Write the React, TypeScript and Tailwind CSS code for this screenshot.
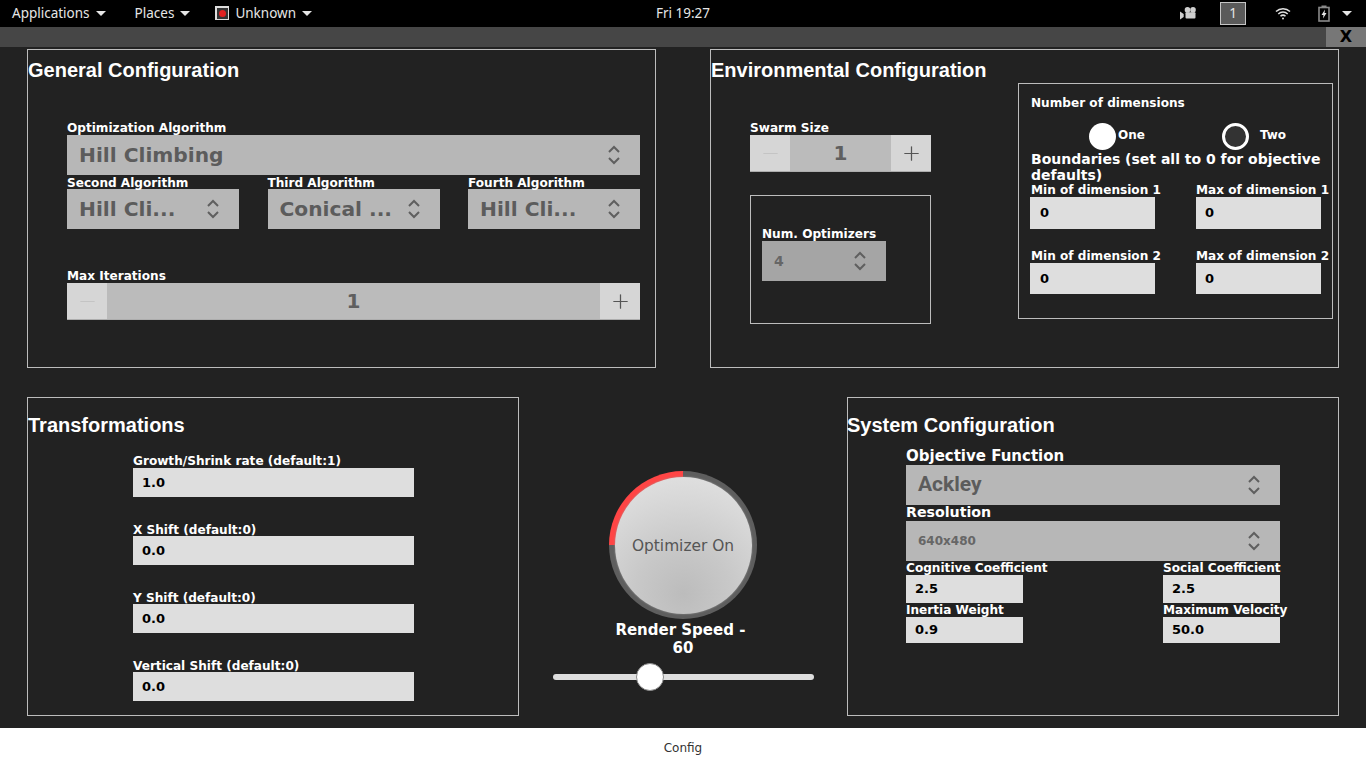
import { Minus, Plus } from "lucide-react";

const sans = "font-['DejaVu_Sans',sans-serif] font-bold";

function Caret() {
  return <span className="ml-[6px] inline-block h-0 w-0 border-x-[5px] border-t-[5px] border-x-transparent border-t-[#e6e6e6]" />;
}

function UpDown({ color = "#5f5f5f" }: { color?: string }) {
  return (
    <svg width="14" height="20" viewBox="0 0 14 20" fill="none" stroke={color} strokeWidth="2" className="shrink-0">
      <path d="M2 7l5-5 5 5" />
      <path d="M2 13l5 5 5-5" />
    </svg>
  );
}

function Label({ children, className = "" }: { children: string; className?: string }) {
  return <div className={`h-[14px] text-[12.1px] leading-[14px] whitespace-nowrap text-white ${sans} ${className}`}>{children}</div>;
}

function Select({ value, className = "" }: { value: string; className?: string }) {
  return (
    <div className={`flex h-[40px] items-center justify-between bg-[#b7b7b7] pl-[12px] pr-[19px] text-[20.2px] text-[#5c5c5c] ${sans} ${className}`}>
      <span className="whitespace-nowrap">{value}</span>
      <UpDown />
    </div>
  );
}

function Stepper({ className = "" }: { className?: string }) {
  return (
    <div className={`flex h-[37px] border-b border-[#adadad] bg-[#bbbbbb] ${className}`}>
      <div className="flex w-[40px] items-center justify-center bg-[#d6d6d6]">
        <Minus size={23} strokeWidth={1.3} className="text-[#c4c4c4]" />
      </div>
      <div className={`flex flex-1 items-center justify-center text-[20px] text-[#5f5f5f] ${sans}`}>1</div>
      <div className="flex w-[40px] items-center justify-center bg-[#d6d6d6]">
        <Plus size={23} strokeWidth={1.3} className="text-[#555555]" />
      </div>
    </div>
  );
}

function Input({ value, className = "" }: { value: string; className?: string }) {
  return <div className={`flex items-center bg-[#dedede] pl-[9px] text-[13px] text-black ${sans} ${className}`}>{value}</div>;
}

function Heading({ children, className = "" }: { children: string; className?: string }) {
  return <h2 className={`text-[20px] leading-[24px] font-bold text-white font-['Liberation_Sans',sans-serif] ${className}`}>{children}</h2>;
}

function TopBar() {
  return (
    <header className="grid h-[27px] shrink-0 grid-cols-3 items-center bg-black pb-[1px] text-[13.5px] text-[#e6e6e6] font-['Noto_Sans',sans-serif]">
      <div className="flex items-center pl-[12px]">
        <span>Applications</span>
        <Caret />
        <span className="ml-[29px]">Places</span>
        <Caret />
        <span className="ml-[25px] flex h-[14px] w-[14px] items-center justify-center bg-[#dddddd]">
          <span className="flex h-[11px] w-[11px] items-center justify-center bg-[#333333]">
            <span className="h-[7px] w-[7px] rounded-full bg-[#e02020]" />
          </span>
        </span>
        <span className="ml-[6px]">Unknown</span>
        <Caret />
      </div>
      <div className="text-center">Fri 19:27</div>
      <div className="flex items-center justify-end pr-[14px]">
        <svg width="16" height="13" viewBox="0 0 16 13" fill="#cfcfcf">
          <circle cx="7.5" cy="2.9" r="2.8" />
          <circle cx="13" cy="2.9" r="2.8" />
          <rect x="5.5" y="5.2" width="10" height="6.3" rx="1" />
          <path d="M0 4.5L3.7 7v3L0 12.5z" />
        </svg>
        <span className="ml-[24px] flex h-[23px] w-[26px] items-center justify-center border border-[#c4c4c4] bg-[#5a5a5a] text-[#e6e6e6]">1</span>
        <svg width="16" height="13" viewBox="0 0 16 13" fill="none" stroke="#e0e0e0" strokeWidth="1.5" className="ml-[29px]">
          <path d="M1 4.5a10 10 0 0 1 14 0" />
          <path d="M3.3 7a6.8 6.8 0 0 1 9.4 0" />
          <path d="M5.5 9.3a3.6 3.6 0 0 1 5 0" />
          <circle cx="8" cy="11.5" r="1" fill="#e0e0e0" stroke="none" />
        </svg>
        <svg width="12" height="17" viewBox="0 0 12 17" className="ml-[27px]">
          <rect x="3.5" y="0.5" width="5" height="2" fill="#8a8a8a" />
          <rect x="1" y="2.5" width="10" height="13.5" fill="none" stroke="#8a8a8a" strokeWidth="1.6" />
          <path d="M7 4.5L3.5 10h2L5 13.5 8.5 8h-2z" fill="#e6e6e6" />
        </svg>
        <span className="ml-[6px] flex">
          <Caret />
        </span>
      </div>
    </header>
  );
}

function General() {
  return (
    <section className="h-[319px] w-[629px] border border-[#bdbdbd]">
      <Heading className="mt-[8px]">General Configuration</Heading>
      <div className="mt-[39px] pl-[39px] pr-[15px]">
        <Label>Optimization Algorithm</Label>
        <Select value="Hill Climbing" />
        <div className="flex justify-between">
          <div className="w-[172px]">
            <Label className="leading-[16px]">Second Algorithm</Label>
            <Select value="Hill Cli..." />
          </div>
          <div className="w-[172px]">
            <Label className="leading-[16px]">Third Algorithm</Label>
            <Select value="Conical ..." />
          </div>
          <div className="w-[172px]">
            <Label className="leading-[16px]">Fourth Algorithm</Label>
            <Select value="Hill Cli..." />
          </div>
        </div>
        <Label className="mt-[40px]">Max Iterations</Label>
        <Stepper />
      </div>
    </section>
  );
}

function Environment() {
  return (
    <section className="h-[319px] w-[629px] border border-[#bdbdbd]">
      <Heading className="mt-[8px]">Environmental Configuration</Heading>
      <div className="mt-px flex pl-[39px] pr-[5px]">
        <div className="w-[181px] pt-[38px]">
          <Label>Swarm Size</Label>
          <Stepper />
          <div className="mt-[23px] h-[129px] border border-[#bdbdbd] pl-[11px] pt-[31px]">
            <Label>Num. Optimizers</Label>
            <div className={`flex h-[40px] w-[124px] items-center justify-between bg-[#a5a5a5] pl-[12px] pr-[19px] text-[14px] text-[#666666] ${sans}`}>
              <span>4</span>
              <UpDown />
            </div>
          </div>
        </div>
        <div className="ml-auto h-[236px] w-[315px] border border-[#bdbdbd] pl-[12px] pt-[12px]">
          <Label>Number of dimensions</Label>
          <div className="mt-[13px] flex h-[27px] items-center">
            <span className="ml-[58px] h-[27px] w-[27px] rounded-full bg-white" />
            <span className={`ml-[2px] pb-[4px] text-[12px] text-white ${sans}`}>One</span>
            <span className="ml-[77px] h-[27px] w-[27px] rounded-full border-[3px] border-white bg-[#333333]" />
            <span className={`ml-[11px] pb-[4px] text-[12px] text-white ${sans}`}>Two</span>
          </div>
          <p className={`mt-px text-[14px] leading-[16px] text-white ${sans}`}>Boundaries (set all to 0 for objective defaults)</p>
          <div className="grid grid-cols-[125px_125px] gap-x-[40px]">
            <div>
              <Label>Min of dimension 1</Label>
              <Input value="0" className="-ml-px h-[32px] w-[125px] pl-[10px]" />
            </div>
            <div>
              <Label>Max of dimension 1</Label>
              <Input value="0" className="h-[32px]" />
            </div>
            <div className="mt-[20px]">
              <Label>Min of dimension 2</Label>
              <Input value="0" className="-ml-px h-[31px] w-[125px] pl-[10px]" />
            </div>
            <div className="mt-[20px]">
              <Label>Max of dimension 2</Label>
              <Input value="0" className="h-[31px]" />
            </div>
          </div>
        </div>
      </div>
    </section>
  );
}

function Transformations() {
  const rows = [
    ["Growth/Shrink rate (default:1)", "1.0", "leading-[10px]"],
    ["X Shift (default:0)", "0.0", "leading-[16px]"],
    ["Y Shift (default:0)", "0.0", "leading-[16px]"],
    ["Vertical Shift (default:0)", "0.0", "leading-[16px]"],
  ];
  return (
    <section className="h-[319px] w-[492px] shrink-0 border border-[#bdbdbd]">
      <Heading className="mt-[15px]">Transformations</Heading>
      <div className="mt-[17px] flex flex-col gap-[25px] pl-[105px]">
        {rows.map(([label, value, lead]) => (
          <div key={label} className="w-[281px]">
            <Label className={lead}>{label}</Label>
            <Input value={value} className="h-[29px]" />
          </div>
        ))}
      </div>
    </section>
  );
}

function Center() {
  return (
    <div className="flex flex-1 flex-col items-center pt-[74px]">
      <div className="flex h-[148px] w-[148px] items-center justify-center rounded-full bg-[conic-gradient(#5e5e5e_0deg_270deg,#ff4545_270deg_360deg)]">
        <div className="flex h-[137px] w-[137px] items-center justify-center rounded-full bg-[radial-gradient(circle_at_50%_85%,#bcbcbc_0%,#c8c8c8_35%,#d8d8d8_70%,#e4e4e4_100%)] pt-[3px] text-[15.4px] text-[#555555] shadow-[0_0_2px_#999999] font-['DejaVu_Sans',sans-serif]">
          Optimizer On
        </div>
      </div>
      <div className={`mt-[2px] w-[140px] text-center text-[15px] leading-[18px] text-white ${sans}`}>Render Speed -{"\u00a0"} 60</div>
      <div className="relative mt-[6px] h-[28px] w-[261px]">
        <div className="mt-[11px] h-[6px] rounded-full bg-[#dedede]" />
        <div className="absolute left-[83px] top-0 h-[28px] w-[28px] rounded-full border border-[#8a8a8a] bg-white" />
      </div>
    </div>
  );
}

function System() {
  return (
    <section className="h-[319px] w-[492px] shrink-0 border border-[#bdbdbd]">
      <Heading className="-ml-px mt-[15px]">System Configuration</Heading>
      <div className="mt-[9px] w-[432px] pl-[58px]">
        <div className={`h-[19px] text-[15px] leading-[21px] text-white ${sans}`}>Objective Function</div>
        <div className="flex h-[40px] items-center justify-between bg-[#b7b7b7] pl-[12px] pr-[19px] text-[21px] font-bold text-[#5c5c5c] font-['Roboto',sans-serif]">
          <span>Ackley</span>
          <UpDown />
        </div>
        <div className={`h-[16px] text-[14.2px] leading-[14px] text-white ${sans}`}>Resolution</div>
        <div className={`flex h-[40px] items-center justify-between bg-[#b7b7b7] pl-[12px] pr-[19px] text-[12px] text-[#666666] ${sans}`}>
          <span>640x480</span>
          <UpDown />
        </div>
        <div className="flex justify-between">
          <div className="w-[117px]">
            <Label>Cognitive Coefficient</Label>
            <Input value="2.5" className="h-[28px]" />
            <Label>Inertia Weight</Label>
            <Input value="0.9" className="h-[26px]" />
          </div>
          <div className="w-[117px]">
            <Label>Social Coefficient</Label>
            <Input value="2.5" className="h-[28px]" />
            <Label>Maximum Velocity</Label>
            <Input value="50.0" className="h-[26px]" />
          </div>
        </div>
      </div>
    </section>
  );
}

export default function App() {
  return (
    <div className="flex h-screen flex-col overflow-hidden bg-[#222222]">
      <TopBar />
      <div className="flex h-[20px] shrink-0 justify-end bg-[#464646]">
        <span className="flex w-[40px] items-center justify-center bg-[#777777] text-[16px] font-bold text-black font-['DejaVu_Sans',sans-serif]">X</span>
      </div>
      <main className="flex flex-1 flex-col gap-[29px] px-[27px] pt-[2px]">
        <div className="flex justify-between">
          <General />
          <Environment />
        </div>
        <div className="flex">
          <Transformations />
          <Center />
          <System />
        </div>
      </main>
      <footer className="flex h-[40px] shrink-0 items-center justify-center bg-white text-[12px] text-[#333333] font-['DejaVu_Sans',sans-serif]">Config</footer>
    </div>
  );
}
